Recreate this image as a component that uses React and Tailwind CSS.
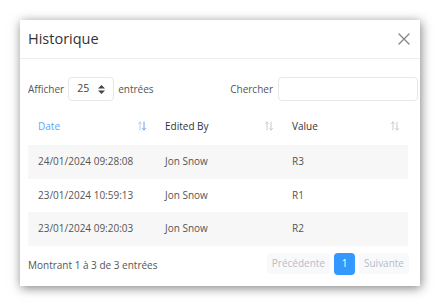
import React from "react";

const rows = [
  { date: "24/01/2024 09:28:08", by: "Jon Snow", value: "R3" },
  { date: "23/01/2024 10:59:13", by: "Jon Snow", value: "R1" },
  { date: "23/01/2024 09:20:03", by: "Jon Snow", value: "R2" },
];

const SortIcon = ({ active }) => (
  <svg width="10" height="10" viewBox="0 0 10 10" fill="none" strokeWidth="1" strokeLinecap="round">
    <path d="M3 9V1M1.5 2.5L3 1l1.5 1.5" stroke={active ? "#b7cdf5" : "#c8cbd0"} />
    <path d="M7 1v8M5.5 7.5L7 9l1.5-1.5" stroke={active ? "#6aa0f0" : "#c8cbd0"} />
  </svg>
);

export default function App() {
  return (
    <div className="w-[440px] h-[306px] bg-white pt-5 pl-5" style={{ fontFamily: "'Open Sans', sans-serif" }}>
      <div className="w-[400px] h-[266px] bg-white shadow-[1px_2px_10px_rgba(0,0,0,0.5)] flex flex-col">
        <div className="h-[39px] flex items-center justify-between pl-[8px] pr-[10px] border-b border-[#eeeeee]">
          <h2 className="text-[14.5px] font-medium text-[#333]">Historique</h2>
          <svg width="12" height="12" viewBox="0 0 12 12" stroke="#888" strokeWidth="1.4" strokeLinecap="round">
            <path d="M1 1l10 10M11 1L1 11" />
          </svg>
        </div>
        <div className="px-2 pt-[18px] flex flex-col">
          <div className="flex items-center justify-between text-[10px] text-[#555]">
            <div className="flex items-center gap-[4px]">
              <span>Afficher</span>
              <div className="w-[46px] h-[24px] border border-[#e5e7eb] rounded-[4px] flex items-center justify-between px-[8px] text-[10.5px] text-[#444]">
                <span>25</span>
                <svg width="7" height="9" viewBox="0 0 7 9" fill="#444">
                  <path d="M3.5 0L7 3.5H0z" />
                  <path d="M3.5 9L0 5.5h7z" />
                </svg>
              </div>
              <span>entrées</span>
            </div>
            <div className="flex items-center gap-[5px] -mr-[6px]">
              <span>Chercher</span>
              <div className="w-[140px] h-[24px] border border-[#e5e7eb] rounded-[4px]" />
            </div>
          </div>

          <table className="w-[380px] mt-[6px] text-[10px] border-collapse">
            <thead>
              <tr className="h-[38px]">
                <th className="w-[127px] text-left font-medium text-[#60a5fa] pl-[10px] pr-[8px]">
                  <div className="flex items-center justify-between">Date<SortIcon active /></div>
                </th>
                <th className="w-[127px] text-left font-medium text-[#333] pl-[10px] pr-[8px]">
                  <div className="flex items-center justify-between">Edited By<SortIcon /></div>
                </th>
                <th className="text-left font-medium text-[#333] pl-[10px] pr-[8px]">
                  <div className="flex items-center justify-between">Value<SortIcon /></div>
                </th>
              </tr>
            </thead>
            <tbody className="text-[#555]">
              {rows.map((r, i) => (
                <tr key={i} className={`h-[33.5px] ${i % 2 === 0 ? "bg-[#f7f7f7]" : "bg-white"}`}>
                  <td className="pl-[10px]">{r.date}</td>
                  <td className="pl-[10px]">{r.by}</td>
                  <td className="pl-[10px]">{r.value}</td>
                </tr>
              ))}
            </tbody>
          </table>

          <div className="flex items-center justify-between mt-[7px] pr-[3px] text-[10px]">
            <span className="text-[#555] mt-[4px]">Montrant 1 à 3 de 3 entrées</span>
            <div className="flex items-center gap-[4px]">
              <span className="h-[21px] px-[5px] flex items-center rounded-[4px] bg-[#f8f9fb] text-[#b8bcc6]">Précédente</span>
              <span className="h-[22px] w-[21px] flex items-center justify-center rounded-[4px] bg-[#3399ff] text-white font-medium">1</span>
              <span className="h-[21px] px-[5px] flex items-center rounded-[4px] bg-[#f8f9fb] text-[#b8bcc6]">Suivante</span>
            </div>
          </div>
        </div>
      </div>
    </div>
  );
}
